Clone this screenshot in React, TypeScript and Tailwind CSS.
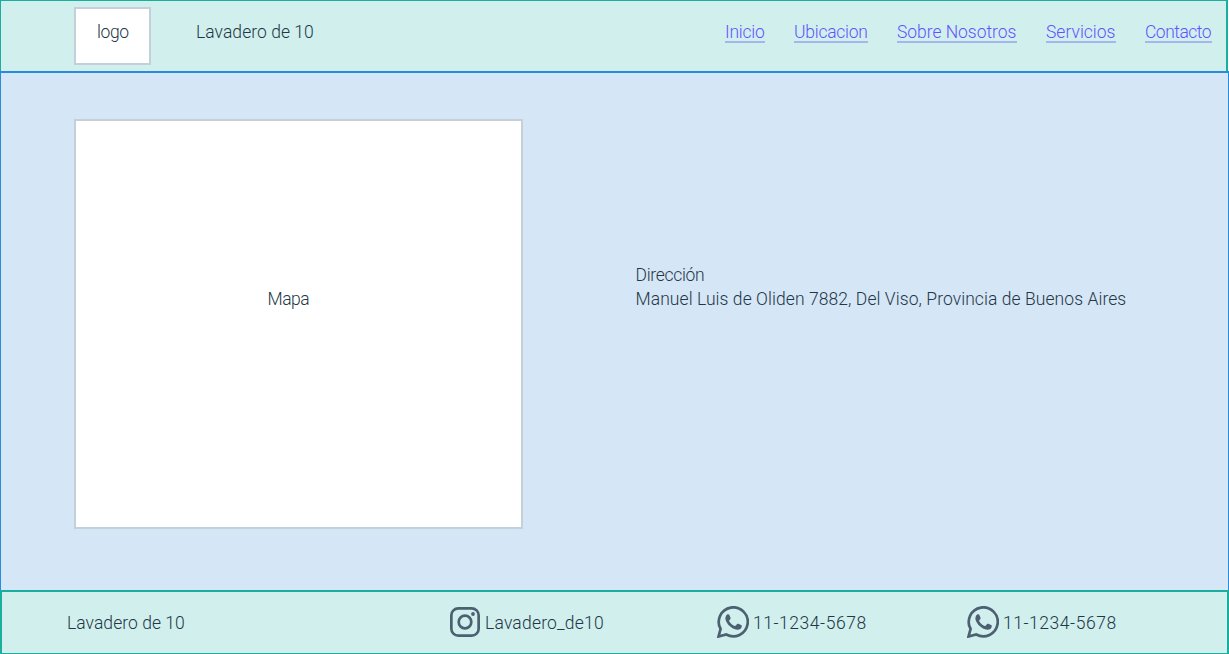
const links = [
  { label: 'Inicio', box: 'w-10 tracking-[-0.25px]' },
  { label: 'Ubicacion', box: 'w-[74px] tracking-[-0.25px]' },
  { label: 'Sobre Nosotros', box: 'w-[120px] tracking-[-0.04px]' },
  { label: 'Servicios', box: 'w-[70px] tracking-[0px]' },
  { label: 'Contacto', box: 'w-[67px] tracking-[-0.5px]' },
];

function InstagramIcon() {
  return (
    <svg className="h-8 w-8 shrink-0" viewBox="0 0 32 32" fill="none" stroke="#4d6072">
      <rect x="2.35" y="2.35" width="27.3" height="27.3" rx="7" strokeWidth="2.7" />
      <circle cx="16" cy="16" r="6.3" strokeWidth="2.7" />
      <circle cx="24" cy="8" r="1.9" fill="#4d6072" stroke="none" />
    </svg>
  );
}

function WhatsappIcon() {
  return (
    <svg className="h-8 w-8 shrink-0" viewBox="0 0 32 32">
      <path
        d="M1.5 30.5 3.6 22.9A14.5 14.5 0 1 1 9.2 28.5Z"
        fill="none"
        stroke="#4d6072"
        strokeWidth="2.7"
      />
      <path
        d="M10.1 8.6c.5-.5 1.8-.6 2.2.2l1.3 3.1c.3.7-.8 1.7-1.3 2.3-.3.4-.2.7.1 1.2 1.3 2.1 3 3.6 5.3 4.5.5.2.8.1 1.1-.3l1.3-1.6c.4-.5.8-.4 1.3-.2l2.7 1.3c.6.3.8.5.7 1.2-.2 2.5-2.5 3.7-4.7 3.5-5.8-.9-10.2-5.600-11.500-9.700-.6-2 .1-4.300 1.500-5.500Z"
        fill="#4d6072"
      />
    </svg>
  );
}

export default function App() {
  return (
    <div className="flex h-[654px] w-[1229px] flex-col overflow-hidden bg-white font-['Roboto',sans-serif] text-[17.5px] font-light leading-6 whitespace-nowrap text-[#233746]">
      <header className="flex h-[71px] w-[1228px] shrink-0 border-t border-r-2 border-l border-[#1aae9f] bg-[#d1efed]">
        <div className="mt-1.5 ml-[73px] h-[58px] w-[77px] shrink-0 border-2 border-[#c3cfd9] bg-white pt-[11px] pl-[21px]">
          <span className="tracking-[-0.4px]">logo</span>
        </div>
        <span className="mt-[19px] ml-11 w-[530px] pl-px tracking-[0.05px]">Lavadero de 10</span>
        <nav className="mt-[19px] flex gap-[29px] text-[#6153ff]">
          {links.map((link) => (
            <a key={link.label} href="#" className={`h-[23px] border-b-2 border-[#a6b5ee] ${link.box}`}>
              {link.label}
            </a>
          ))}
        </nav>
      </header>
      <main className="flex h-[519px] shrink-0 border-x border-t-2 border-[#288bde] bg-[#d5e6f6]">
        <div className="mt-[46px] ml-[73px] h-[410px] w-[449px] shrink-0 border-2 border-[#c3cfd9] bg-white pt-[166px] pl-[191.5px]">
          <span className="tracking-[-0.5px]">Mapa</span>
        </div>
        <div className="mt-[190px] ml-[112.5px]">
          <p className="tracking-[-0.3px]">Dirección</p>
          <p className="tracking-[0.07px]">Manuel Luis de Oliden 7882, Del Viso, Provincia de Buenos Aires</p>
        </div>
      </main>
      <footer className="flex h-16 shrink-0 border-x-2 border-t-2 border-b border-[#1aae9f] bg-[#d1efed] pt-3.5">
        <span className="mt-[5px] ml-16 w-[383px] pl-px tracking-[0.05px]">Lavadero de 10</span>
        <div className="flex w-[268px] gap-1">
          <InstagramIcon />
          <span className="mt-[5px] tracking-[0.2px]">Lavadero_de10</span>
        </div>
        <div className="flex w-[250px] gap-1">
          <WhatsappIcon />
          <span className="mt-[5px] tracking-[0.55px]">11-1234-5678</span>
        </div>
        <div className="flex gap-1">
          <WhatsappIcon />
          <span className="mt-[5px] tracking-[0.55px]">11-1234-5678</span>
        </div>
      </footer>
    </div>
  );
}
